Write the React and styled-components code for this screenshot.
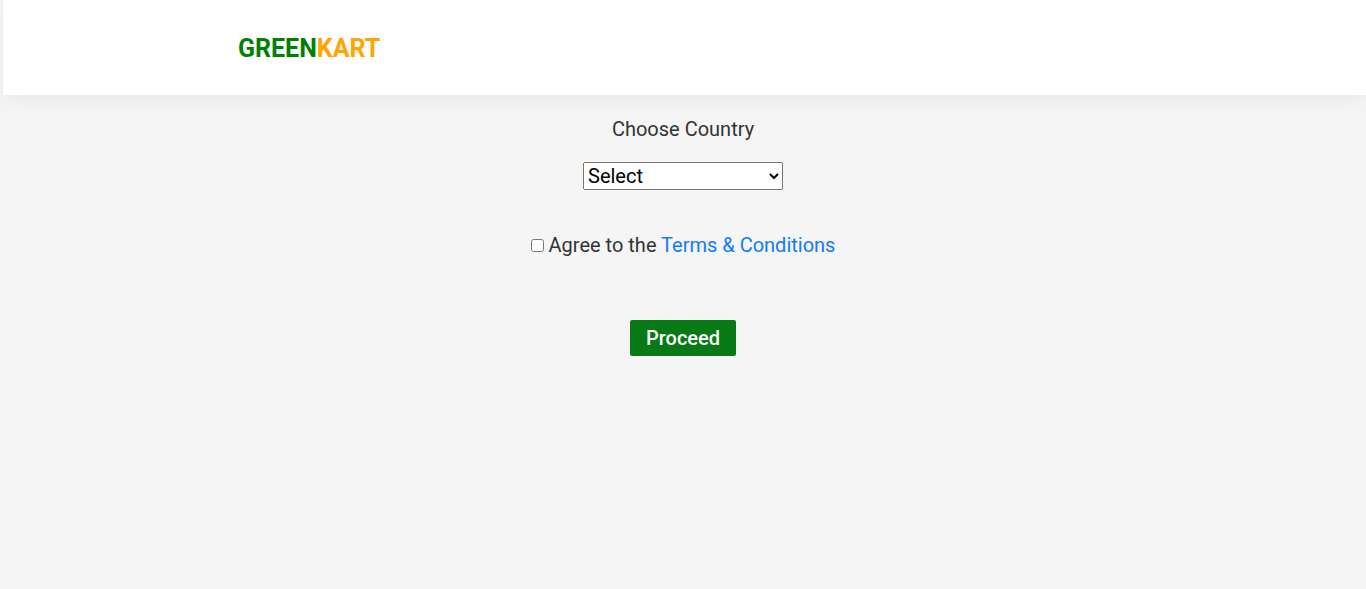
import React from "react";
import styled, { createGlobalStyle } from "styled-components";

const GlobalStyle = createGlobalStyle`
  *, *::before, *::after { box-sizing: border-box; }
  body {
    margin: 0;
    min-height: 100vh;
    background: #f5f5f5;
    color: #333;
    font-family: Roboto, sans-serif;
    font-size: 20px;
    line-height: 24px;
  }
`;

const Header = styled.header`
  margin-left: 3px;
  padding: 33px 235px 31px;
  background: #fff;
  box-shadow: 0 5px 20px rgba(0, 0, 0, 0.05);
`;

const Brand = styled.a`
  display: block;
  width: fit-content;
  color: green;
  font-size: 25px;
  font-weight: 700;
  line-height: 31px;
  text-decoration: none;
`;

const BrandAccent = styled.span`
  color: orange;
`;

const Form = styled.form`
  display: flex;
  flex-direction: column;
  align-items: center;
  padding-top: 22px;
`;

const Select = styled.select`
  width: 200px;
  height: 28px;
  margin: 21px 0 43px;
  font: inherit;
`;

const Agreement = styled.div`
  display: flex;
  align-items: center;
`;

const Checkbox = styled.input`
  width: 13px;
  height: 13px;
  margin: 1px 5px 0 0;
`;

const TermsLink = styled.a`
  color: #117bff;
  text-decoration: none;
`;

const Button = styled.button`
  margin-top: 63px;
  padding: 6px 16px;
  border: 0;
  border-radius: 2px;
  background: #077915;
  color: #fff;
  font: inherit;
  font-weight: 500;
`;

export default function App() {
  return (
    <>
      <GlobalStyle />
      <Header>
        <Brand href="#">GREEN<BrandAccent>KART</BrandAccent></Brand>
      </Header>
      <main>
        <Form onSubmit={(e) => e.preventDefault()}>
          <label htmlFor="country">Choose Country</label>
          <Select id="country">
            <option>Select</option>
          </Select>
          <Agreement>
            <Checkbox type="checkbox" id="agree" />
            <span>
              <label htmlFor="agree">Agree to the</label>{" "}
              <TermsLink href="#terms">Terms &amp; Conditions</TermsLink>
            </span>
          </Agreement>
          <Button type="submit">Proceed</Button>
        </Form>
      </main>
    </>
  );
}
